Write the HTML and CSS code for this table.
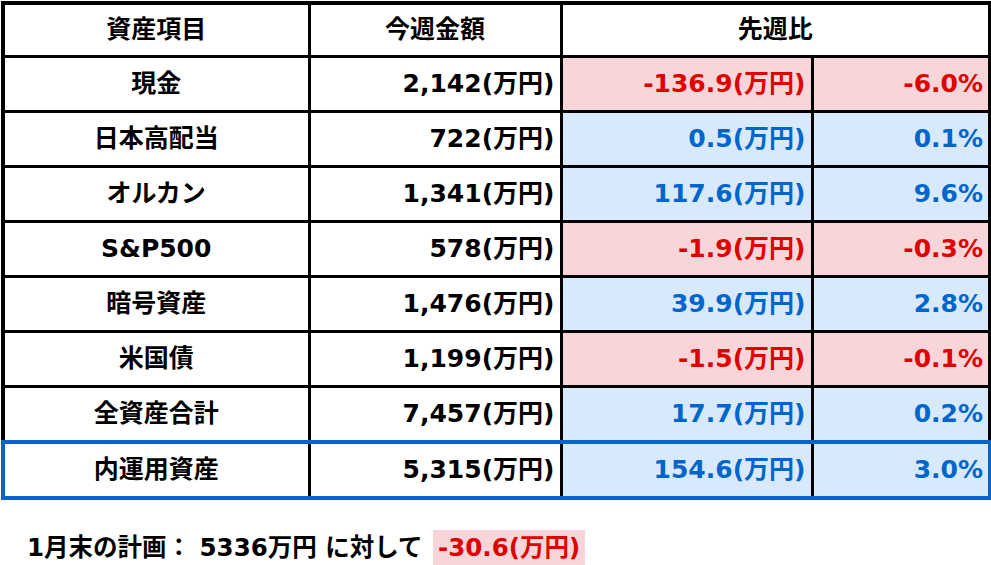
FILE: index.html
```html
<!DOCTYPE html>
<html lang="ja">
<head>
<meta charset="utf-8">
<link rel="stylesheet" href="styles.css">
</head>
<body>
<table class="assets">
  <colgroup>
    <col class="c-name"><col class="c-amount"><col class="c-diff"><col class="c-pct">
  </colgroup>
  <thead>
    <tr><th>資産項目</th><th>今週金額</th><th colspan="2">先週比</th></tr>
  </thead>
  <tbody>
    <tr class="down"><td class="name">現金</td><td class="num">2,142(万円)</td><td class="num chg">-136.9(万円)</td><td class="num chg">-6.0%</td></tr>
    <tr class="up"><td class="name">日本高配当</td><td class="num">722(万円)</td><td class="num chg">0.5(万円)</td><td class="num chg">0.1%</td></tr>
    <tr class="up"><td class="name">オルカン</td><td class="num">1,341(万円)</td><td class="num chg">117.6(万円)</td><td class="num chg">9.6%</td></tr>
    <tr class="down"><td class="name">S&amp;P500</td><td class="num">578(万円)</td><td class="num chg">-1.9(万円)</td><td class="num chg">-0.3%</td></tr>
    <tr class="up"><td class="name">暗号資産</td><td class="num">1,476(万円)</td><td class="num chg">39.9(万円)</td><td class="num chg">2.8%</td></tr>
    <tr class="down"><td class="name">米国債</td><td class="num">1,199(万円)</td><td class="num chg">-1.5(万円)</td><td class="num chg">-0.1%</td></tr>
    <tr class="up"><td class="name">全資産合計</td><td class="num">7,457(万円)</td><td class="num chg">17.7(万円)</td><td class="num chg">0.2%</td></tr>
    <tr class="up highlight"><td class="name">内運用資産</td><td class="num">5,315(万円)</td><td class="num chg">154.6(万円)</td><td class="num chg">3.0%</td></tr>
  </tbody>
</table>
<p class="plan">1月末の計画： 5336万円 に対して <span class="plan-diff">-30.6(万円)</span></p>
</body>
</html>
```
FILE: styles.css
```css
html, body {
  margin: 0;
  padding: 0;
  background: #ffffff;
}
body {
  font-family: "DejaVu Sans", "Noto Sans CJK JP", sans-serif;
  font-weight: 700;
  color: #000;
  font-size: 25px;
}
.assets {
  border-collapse: collapse;
  margin: 1px 0 0 1px;
  width: 987px;
  table-layout: fixed;
  border: 4px solid #000;
}
.c-name { width: 306px; }
.c-amount { width: 252px; }
.c-diff { width: 251px; }
.c-pct { width: 178px; }
.assets th, .assets td {
  border: 3px solid #000;
  padding: 0 5px 0 0;
  white-space: nowrap;
  overflow: hidden;
  line-height: 30px;
}
.assets th {
  height: 50px;
  text-align: center;
  font-weight: 700;
  padding: 0;
}
.assets td {
  height: 52px;
}
.assets td.name {
  text-align: center;
  padding: 0;
}
.assets td.num {
  text-align: right;
}
.down .chg {
  background: #f8d5d8;
  color: #e00000;
}
.up .chg {
  background: #d7e9fb;
  color: #0066cc;
}
.highlight td {
  border-top: 4px solid #0a64c8;
  border-bottom: 4px solid #0a64c8;
}
.highlight td:first-child {
  border-left: 4px solid #0a64c8;
}
.highlight td:last-child {
  border-right: 4px solid #0a64c8;
}
.plan {
  margin: 30px 0 0 27px;
  line-height: 36px;
  font-size: 24.5px;
  white-space: nowrap;
}
.plan-diff {
  display: inline-block;
  background: #f8d5d8;
  color: #e00000;
  padding: 0 5px;
  margin-left: 2px;
}
```
